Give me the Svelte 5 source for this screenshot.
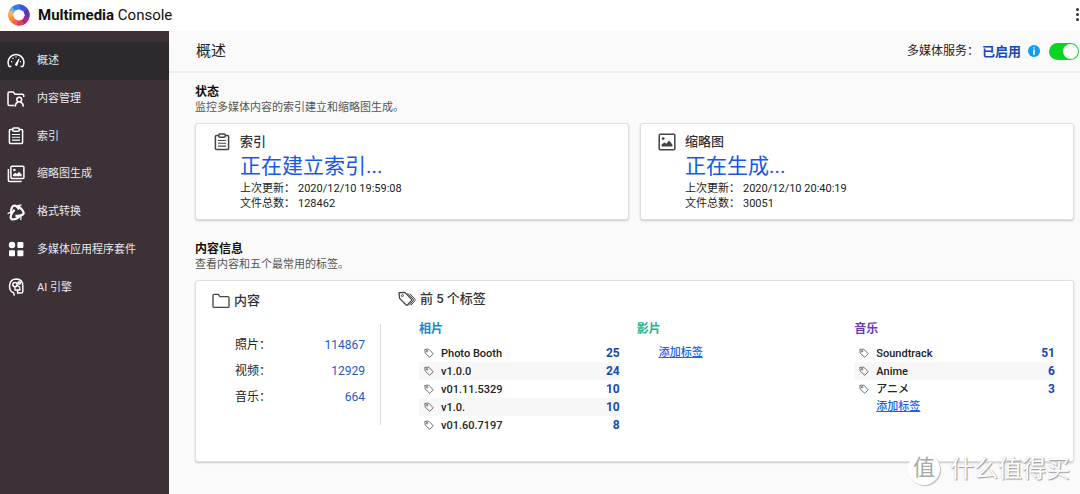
<script>
  const menu = [
    { icon: 'gauge', label: '概述' },
    { icon: 'userFolder', label: '内容管理' },
    { icon: 'clipboard', label: '索引' },
    { icon: 'images', label: '缩略图生成' },
    { icon: 'convert', label: '格式转换' },
    { icon: 'apps', label: '多媒体应用程序套件' },
    { icon: 'brain', label: 'AI 引擎' },
  ];

  const statuses = [
    { icon: 'clipboard', title: '索引', state: '正在建立索引...', updated: '2020/12/10 19:59:08', total: '128462' },
    { icon: 'image', title: '缩略图', state: '正在生成...', updated: '2020/12/10 20:40:19', total: '30051' },
  ];

  const counts = [
    { label: '照片', value: 114867 },
    { label: '视频', value: 12929 },
    { label: '音乐', value: 664 },
  ];

  const tagGroups = [
    {
      title: '相片',
      tone: 'photo',
      tags: [
        ['Photo Booth', 25],
        ['v1.0.0', 24],
        ['v01.11.5329', 10],
        ['v1.0.', 10],
        ['v01.60.7197', 8],
      ],
    },
    { title: '影片', tone: 'video', tags: [] },
    {
      title: '音乐',
      tone: 'music',
      tags: [
        ['Soundtrack', 51],
        ['Anime', 6],
        ['アニメ', 3],
      ],
    },
  ];

  let current = $state(0);
  let enabled = $state(true);
</script>

{#snippet icon(name)}
  <svg class="icon" viewBox="0 0 18 18" fill="none" stroke="currentColor" stroke-width="1.5" aria-hidden="true">
    {#if name === 'gauge'}
      <path d="M4.4 14.6 H2.3 A7.9 7.9 0 1 1 15.7 14.6 H13.6" stroke-linejoin="round" />
      <path d="M8.2 12.8 L12 6.8 L9.8 13.6 Z" fill="currentColor" stroke-width="1" />
      <path d="M4 9.6 H5.2 M5.6 6 L6.4 6.8 M9 4.4 V5.6 M12.9 9.6 H14" stroke-width="1.3" />
    {:else if name === 'userFolder'}
      <path d="M7.2 15.6 H2.6 Q1 15.6 1 14 V3.4 Q1 2 2.4 2 H6.2 L8 4.2 H15.2 Q16.8 4.2 16.8 5.6 V7" />
      <circle cx="12.2" cy="9.6" r="2.4" />
      <path d="M8.2 16.6 Q8.4 12.8 11 12 M13.4 12 Q16 12.8 16.4 16.6" />
    {:else if name === 'clipboard'}
      <rect x="2.4" y="2.6" width="13.2" height="14" rx="1" />
      <rect x="5.8" y="1" width="6.4" height="3.2" rx="1" fill="var(--icon-back)" />
      <path d="M5 7.5 H13 M5 10.3 H13 M5 13.1 H13" stroke-width="1.1" />
    {:else if name === 'images'}
      <rect x="3.9" y="1.2" width="13" height="12.4" rx="1" />
      <path d="M1.4 4 V15.4 Q1.4 16.4 2.4 16.4 H14.6" />
      <path d="M6 11.2 V9.6 L8.4 7.8 L9.8 9 L12 6.8 L14.8 9.8 V11.2 Z" fill="currentColor" stroke="none" />
      <circle cx="7.4" cy="5" r="1.3" fill="currentColor" stroke="none" />
    {:else if name === 'image'}
      <rect x="1.2" y="1.2" width="15.6" height="15.6" rx="1" />
      <path d="M3.6 13.4 V11.2 L6.6 9.4 L8.4 10.8 L11 7.6 L14.4 11.4 V13.4 Z" fill="currentColor" stroke="none" />
      <circle cx="5.2" cy="5.6" r="1.4" fill="currentColor" stroke="none" />
    {:else if name === 'convert'}
      <path d="M4.4 11.6 Q3.4 5.6 6 3 Q9 1.2 12 6.4" stroke-width="2.2" />
      <path d="M10.4 2.4 Q17.4 8 16.6 10.6 Q14.6 13.4 8.4 12.6" stroke-width="2.2" />
      <path d="M12.8 13.4 Q7.4 17.6 4.4 16 Q2 13.4 7.6 6.8" stroke-width="2.2" />
      <path d="M0.6 10.6 L4.2 9 M12 2.4 L14.6 1.8 M14 13 L13.8 17" stroke-width="1.2" />
    {:else if name === 'apps'}
      <g fill="currentColor" stroke="none">
        <circle cx="5" cy="5" r="3.2" />
        <rect x="10.4" y="2" width="6" height="6" rx="1" />
        <rect x="2" y="10.2" width="6" height="6" rx="1" />
        <rect x="10.4" y="10.2" width="6" height="6" rx="1" />
      </g>
    {:else if name === 'brain'}
      <path d="M7.4 17.6 L6.6 14.8 Q2 13.2 2.6 7.4 Q3.2 1 9.4 1 Q15.8 1.2 15.8 8 V13.4 Q15.8 15 14 15 H10.6 V12.6" />
      <circle cx="8" cy="6.6" r="2.2" />
      <circle cx="12.2" cy="5" r="1.2" />
      <path d="M8 8.8 V12 H12.8 V9 M10 7.4 L13 9.2" stroke-width="1.3" />
    {:else if name === 'folder'}
      <path d="M1 14.2 V3.4 Q1 2.4 2 2.4 H6.2 L8 4.6 H16 Q17 4.6 17 5.6 V14.2 Q17 15.4 16 15.4 H2 Q1 15.4 1 14.2 Z" stroke-width="1.3" />
    {:else if name === 'tags'}
      <path d="M1 2.6 L6.8 2.4 L13.6 9.4 Q14 10 13.4 10.6 L9.4 15 Q8.8 15.6 8.2 15 L1.6 8.4 Z" stroke-width="1.3" stroke-linejoin="round" />
      <path d="M9.4 3 L15.2 9.2 Q15.8 10 15.2 10.8 L11.2 15.4 M12 3.8 L17 9.2 Q17.4 10 16.8 10.8 L13 15" stroke-width="1" />
      <circle cx="4.4" cy="5.6" r="1" stroke-width="1" />
    {:else if name === 'tag'}
      <path d="M1.4 2.6 L8.6 2 L16.6 10.4 L10.4 16.8 L2.2 9.2 Z" stroke-linejoin="round" />
      <circle cx="5.6" cy="5.8" r="1.4" />
    {/if}
  </svg>
{/snippet}

<div class="app">
  <header class="topbar">
    <svg class="logo" viewBox="0 0 22 22" aria-hidden="true">
      <circle cx="11" cy="11" r="10.6" fill="#f4603f" />
      <path d="M11 11 L1.4 6.6 A10.6 10.6 0 0 1 6 1.7 Z" fill="#5cb8f6" />
      <path d="M11 11 L4 3 A10.6 10.6 0 0 1 13 0.6 Z" fill="#2f80ea" />
      <path d="M11 11 L11.6 0.4 A10.6 10.6 0 0 1 20.2 5.8 Z" fill="#3f55dd" />
      <path d="M11 11 L19.6 4.8 A10.6 10.6 0 0 1 21 14.4 Z" fill="#5a36b8" />
      <path d="M11 11 L21.3 13.4 A10.6 10.6 0 0 1 15 20.8 Z" fill="#b3267e" />
      <path d="M11 11 L16.2 20.2 A10.6 10.6 0 0 1 9 21.4 Z" fill="#e03c5c" />
      <path d="M11 11 L3.6 18.6 A10.6 10.6 0 0 1 0.4 11 Z" fill="#f98a3c" />
      <path d="M11 11 L0.6 13 A10.6 10.6 0 0 1 1.6 6.2 Z" fill="#fbb24a" />
      <path d="M11 5.2 L15.4 7.2 L16.8 11.2 L14.8 15.2 L10.8 16.8 L6.8 15 L5.2 11 L7 6.8 Z" fill="#fff" />
    </svg>
    <h1><strong>Multimedia</strong> Console</h1>
    <button class="more" type="button" aria-label="更多">
      <span></span><span></span><span></span>
    </button>
  </header>

  <div class="body">
    <nav class="sidebar">
      {#each menu as item, i}
        <a href="#{item.icon}" class:active={i === current} onclick={() => (current = i)}>
          {@render icon(item.icon)}
          <span>{item.label}</span>
        </a>
      {/each}
    </nav>

    <main>
      <div class="pagebar">
        <h2>概述</h2>
        <label class="service" for="service">多媒体服务：</label>
        <strong class="service-state">已启用</strong>
        <svg class="info" viewBox="0 0 12 12" aria-hidden="true">
          <circle cx="6" cy="6" r="6" fill="#0d9dfb" />
          <path d="M5.2 2.2 H6.8 V3.6 H5.2 Z M5.2 4.6 H6.8 V9.8 H5.2 Z" fill="#fff" />
        </svg>
        <input id="service" class="switch" type="checkbox" bind:checked={enabled} />
      </div>

      <section class="block">
        <h3>状态</h3>
        <p class="hint">监控多媒体内容的索引建立和缩略图生成。</p>
        <div class="cards">
          {#each statuses as s}
            <article class="card status">
              {@render icon(s.icon)}
              <div>
                <h4>{s.title}</h4>
                <p class="state">{s.state}</p>
                <dl>
                  <dt>上次更新：</dt>
                  <dd>{s.updated}</dd>
                  <dt>文件总数：</dt>
                  <dd>{s.total}</dd>
                </dl>
              </div>
            </article>
          {/each}
        </div>
      </section>

      <section class="block info-block">
        <h3>内容信息</h3>
        <p class="hint">查看内容和五个最常用的标签。</p>
        <article class="card content">
          <div class="summary">
            <h4>{@render icon('folder')}内容</h4>
            <table class="counts">
              <tbody>
                {#each counts as c}
                  <tr><th scope="row">{c.label}：</th><td>{c.value}</td></tr>
                {/each}
              </tbody>
            </table>
          </div>
          <div class="top-tags">
            <h4>{@render icon('tags')}前 5 个标签</h4>
            <div class="groups">
              {#each tagGroups as g}
                <div class="group {g.tone}">
                  <h5>{g.title}</h5>
                  {#if g.tags.length}
                    <table class="tags">
                      <tbody>
                        {#each g.tags as [name, n]}
                          <tr>
                            <td class="mark">{@render icon('tag')}</td>
                            <th scope="row">{name}</th>
                            <td class="num">{n}</td>
                          </tr>
                        {/each}
                      </tbody>
                    </table>
                  {/if}
                  {#if g.tags.length < 5}
                    <a class="add" href="#add-{g.tone}">添加标签</a>
                  {/if}
                </div>
              {/each}
            </div>
          </div>
        </article>
      </section>
    </main>
  </div>

  <div class="watermark"><span class="seal">值</span><span>什么值得买</span></div>
</div>

<style>
  :global(body) {
    margin: 0;
  }

  .app {
    position: relative;
    display: flex;
    flex-direction: column;
    min-height: 100vh;
    overflow: hidden;
    background: #fafafa;
    color: #222;
    font-family: Roboto, 'Noto Sans CJK SC', sans-serif;
    font-size: 11px;
    line-height: 15px;
  }

  .app * {
    box-sizing: border-box;
  }

  h1, h2, h3, h4, h5, p, dl, dd {
    margin: 0;
  }

  .icon {
    display: block;
    flex: none;
    width: 18px;
    height: 18px;
    --icon-back: #fff;
  }

  .topbar {
    display: flex;
    align-items: center;
    height: 31px;
    padding: 0 1px 2px 8px;
    background: #fff;
  }

  .logo {
    width: 22px;
    height: 22px;
  }

  h1 {
    margin-left: 8px;
    color: #111;
    font-size: 15px;
    font-weight: 400;
    line-height: 20px;
  }

  h1 strong {
    font-weight: 700;
  }

  .more {
    display: flex;
    flex-direction: column;
    gap: 2px;
    margin-left: auto;
    padding: 0;
    border: 0;
    background: none;
  }

  .more span {
    width: 3px;
    height: 3px;
    border-radius: 50%;
    background: #333;
  }

  .body {
    display: flex;
    flex: 1;
  }

  .sidebar {
    flex: none;
    width: 169px;
    padding: 11px 0 188px;
    display: grid;
    grid-template-rows: repeat(7, 1fr);
    background: #3b3137;
  }

  .sidebar a {
    display: flex;
    align-items: center;
    gap: 12px;
    padding-left: 7px;
    color: #e9e6e8;
    text-decoration: none;
  }

  .sidebar a.active {
    background: #2d292c;
  }

  .sidebar .icon {
    color: #fff;
    --icon-back: #3b3137;
  }

  main {
    flex: 1;
    min-width: 0;
  }

  .pagebar {
    display: flex;
    align-items: center;
    height: 42px;
    padding-left: 27px;
    border-bottom: 2px solid #ededed;
  }

  h2 {
    margin-right: auto;
    color: #222;
    font-size: 15px;
    font-weight: 400;
    line-height: 20px;
  }

  .service {
    font-size: 12px;
  }

  .service-state {
    margin-left: 3px;
    color: #1549b5;
    font-size: 13px;
    font-weight: 700;
  }

  .info {
    width: 12px;
    height: 12px;
    margin: 0 9px 0 7px;
  }

  .switch {
    appearance: none;
    display: flex;
    width: 30px;
    height: 17px;
    margin: 0 1px 0 0;
    padding: 1px;
    border-radius: 9px;
    background: #bbb;
  }

  .switch::before {
    content: '';
    width: 15px;
    height: 15px;
    border-radius: 50%;
    background: #fff;
  }

  .switch:checked {
    justify-content: flex-end;
    background: #0bd522;
  }

  .block {
    padding: 11px 6px 0 26px;
  }

  .info-block {
    padding-top: 21px;
    padding-bottom: 32px;
  }

  h3 {
    color: #111;
    font-size: 12px;
    font-weight: 700;
    line-height: 16px;
  }

  .hint {
    margin-bottom: 7px;
    color: #555;
    line-height: 16px;
  }

  .card {
    border: 1px solid #e0e0e4;
    border-radius: 3px;
    background: #fff;
    box-shadow: 0 1px 2px rgba(0, 0, 0, 0.2);
  }

  .cards {
    display: grid;
    grid-template-columns: 1fr 1fr;
    gap: 11px;
  }

  .status {
    display: flex;
    gap: 9px;
    padding: 9px 17px 8px;
  }

  h4 {
    color: #333;
    font-size: 13px;
    font-weight: 500;
    line-height: 18px;
  }

  .status .icon,
  h4 .icon {
    color: #444;
  }

  .state {
    color: #1259e8;
    font-size: 21px;
    line-height: 30px;
  }

  dl {
    display: grid;
    grid-template-columns: 58px 1fr;
  }

  .content {
    display: flex;
    min-height: 182px;
  }

  .summary {
    flex: none;
    width: 186px;
    padding: 11px 0 0 16px;
  }

  .content h4 {
    display: flex;
    align-items: center;
    gap: 4px;
  }

  .counts {
    width: 169px;
    height: 101px;
    margin-top: 14px;
    border-right: 1px solid #ddd;
    border-collapse: separate;
    border-spacing: 0;
    font-size: 12px;
    padding: 8px 15px 15px 23px;
  }

  .counts th,
  .counts td {
    height: 26px;
    padding: 0;
    font-weight: 400;
    text-align: left;
  }

  .counts td {
    color: #1f57c8;
    text-align: right;
  }

  .top-tags {
    flex: 1;
    min-width: 0;
    padding: 9px 18px 0 16px;
  }

  .groups {
    display: grid;
    grid-template-columns: repeat(3, 1fr);
    gap: 17px;
    margin-top: 12px;
    padding-left: 21px;
  }

  h5 {
    margin-bottom: 6px;
    font-size: 12px;
    font-weight: 700;
    line-height: 18px;
  }

  .photo h5 {
    color: #1687cf;
  }

  .video h5 {
    color: #1bb394;
  }

  .music h5 {
    color: #6a3cb5;
  }

  .tags {
    width: 100%;
    border-collapse: collapse;
  }

  .tags tr:nth-child(even) {
    background: #f7f7f7;
  }

  .tags th,
  .tags td {
    height: 18px;
    padding: 0;
    font-weight: 500;
    text-align: left;
  }

  .tags .mark {
    width: 22px;
    padding-left: 5px;
  }

  .tags .icon {
    width: 10px;
    height: 10px;
    color: #555;
  }

  .tags .num {
    color: #1549b5;
    font-size: 12px;
    font-weight: 700;
    text-align: right;
  }

  .add {
    display: block;
    width: max-content;
    margin-left: 22px;
    color: #1263f1;
    font-weight: 500;
    line-height: 18px;
  }

  .watermark {
    position: absolute;
    right: 10px;
    bottom: 9px;
    display: flex;
    align-items: center;
    gap: 10px;
    color: #fff;
    font-size: 24px;
    line-height: 32px;
    text-shadow: 1px 1px 1px #999, 0 0 1px #bbb;
    pointer-events: none;
  }

  .seal {
    width: 32px;
    height: 32px;
    border-radius: 50%;
    background: #fff;
    color: #aaa;
    font-size: 22px;
    line-height: 30px;
    text-align: center;
    text-shadow: none;
    box-shadow: 1px 1px 1px #bbb;
  }
</style>
